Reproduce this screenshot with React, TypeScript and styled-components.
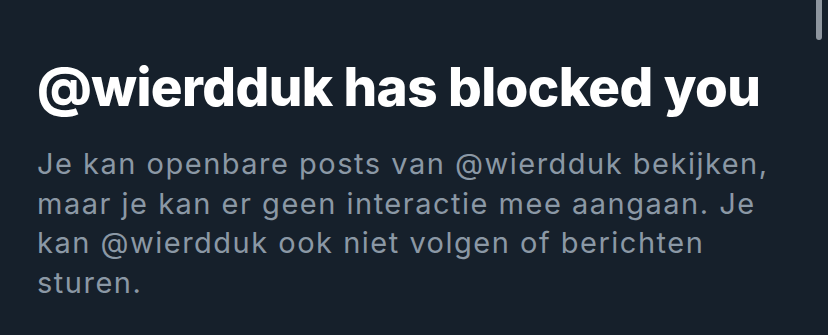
import React from "react";
import styled, { createGlobalStyle } from "styled-components";

const Global = createGlobalStyle`
  html, body {
    margin: 0;
    padding: 0;
    background: #16202b;
  }
  body {
    width: 828px;
    height: 335px;
    overflow: hidden;
  }
`;

const Screen = styled.div`
  position: relative;
  width: 828px;
  height: 335px;
  background: #16202b;
  box-sizing: border-box;
  padding: 57px 40px 0 37px;
  display: flex;
  flex-direction: column;
  gap: 27px;
  font-family: Inter, "Liberation Sans", sans-serif;
`;

const Title = styled.h1`
  margin: 0;
  color: #ffffff;
  font-size: 53px;
  font-weight: 800;
  line-height: 60px;
  letter-spacing: -0.6px;
  white-space: nowrap;
`;

const Body = styled.p`
  margin: 0;
  color: #8b98a5;
  font-size: 29px;
  font-weight: 400;
  line-height: 39.7px;
  letter-spacing: 1.5px;
`;

const ScrollThumb = styled.div`
  position: absolute;
  top: -6px;
  right: 6px;
  width: 6px;
  height: 46px;
  border-radius: 3px;
  background: #8e969f;
`;

export default function App() {
  return (
    <>
      <Global />
      <Screen>
        <Title>@wierdduk has blocked you</Title>
        <Body>
          Je kan openbare posts van @wierdduk bekijken, maar je kan er geen
          interactie mee aangaan. Je kan @wierdduk ook niet volgen of berichten
          sturen.
        </Body>
        <ScrollThumb />
      </Screen>
    </>
  );
}
